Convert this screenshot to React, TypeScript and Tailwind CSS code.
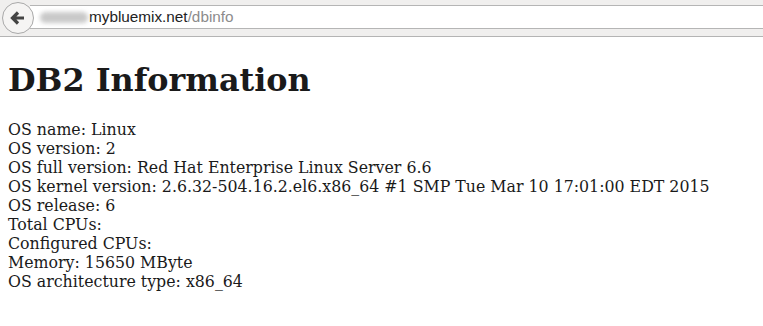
const rows = [
  'OS name: Linux',
  'OS version: 2',
  'OS full version: Red Hat Enterprise Linux Server 6.6',
  'OS kernel version: 2.6.32-504.16.2.el6.x86_64 #1 SMP Tue Mar 10 17:01:00 EDT 2015',
  'OS release: 6',
  'Total CPUs: ',
  'Configured CPUs: ',
  'Memory: 15650 MByte',
  'OS architecture type: x86_64',
]

export default function App() {
  return (
    <div className="w-[763px] h-[326px] bg-white overflow-hidden">
      {/* browser toolbar */}
      <div className="h-[37px] bg-[#f0efee] border-b border-[#b4b4b4] relative">
        <div className="absolute left-[30px] right-0 top-[5px] h-[24px] bg-white border-y border-[#b5b5b5] flex items-center pl-[10px] font-['Liberation_Sans',sans-serif] text-[15.3px]">
          <span className="inline-block w-[48px] h-[11px] rounded-full bg-[#c9c9c9] blur-[2px] mr-[1px]" />
          <span className="text-[#222]">mybluemix.net</span>
          <span className="text-[#8c8c8c]">/dbinfo</span>
        </div>
        <div className="absolute left-[2px] top-[2px] w-[32px] h-[32px] rounded-full bg-[#f5f4f3] border border-[#a9a9a9] flex items-center justify-center">
          <svg width="16" height="16" viewBox="0 0 16 16">
            <path d="M8 2.5 L2.5 8 L8 13.5 M3 8 H14" fill="none" stroke="#444" strokeWidth="3.2" strokeLinejoin="miter" />
          </svg>
        </div>
      </div>

      {/* page */}
      <div className="px-[8px] font-['DejaVu_Serif',serif] text-[#1a1a1a]">
        <h1 className="text-[31.8px] font-bold leading-[37px] mt-[24px] mb-[22px]">DB2 Information</h1>
        <div className="text-[15.8px] leading-[19px]">
          {rows.map((r) => (
            <div key={r}>{r}</div>
          ))}
        </div>
      </div>
    </div>
  )
}
